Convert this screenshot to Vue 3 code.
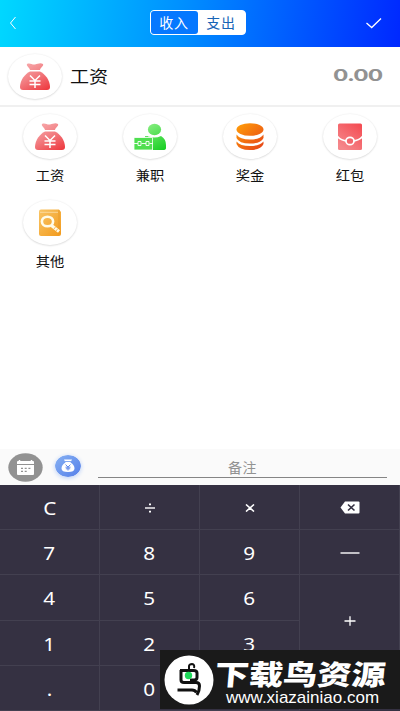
<script setup>
import { ref } from 'vue'

const categories = [
  { name: '工资', icon: 'bag' },
  { name: '兼职', icon: 'worker' },
  { name: '奖金', icon: 'coins' },
  { name: '红包', icon: 'envelope' },
  { name: '其他', icon: 'book' }
]
const selected = ref(categories[0])
const keys = ['C', '÷', '×', 'del', '7', '8', '9', 'minus', '4', '5', '6', 'plus', '1', '2', '3', '.', '0', '']
</script>

<template>
  <div class="screen">
    <svg class="defs" width="0" height="0">
      <defs>
        <linearGradient id="red" gradientUnits="userSpaceOnUse" x1="20" y1="8" x2="36" y2="37">
          <stop offset="0" stop-color="#f7a8aa" /><stop offset="0.45" stop-color="#f27f83" /><stop offset="1" stop-color="#ee3c42" />
        </linearGradient>
        <linearGradient id="green" gradientUnits="userSpaceOnUse" x1="24" y1="8" x2="40" y2="36">
          <stop offset="0" stop-color="#90f088" /><stop offset="1" stop-color="#19cf24" />
        </linearGradient>
        <linearGradient id="orange" gradientUnits="userSpaceOnUse" x1="16" y1="9" x2="38" y2="36">
          <stop offset="0" stop-color="#ff9c08" /><stop offset="1" stop-color="#e64418" />
        </linearGradient>
        <linearGradient id="pink" x1="1" y1="0" x2="0.3" y2="1">
          <stop offset="0" stop-color="#f4484f" /><stop offset="1" stop-color="#f5878b" />
        </linearGradient>
        <linearGradient id="amber" x1="0" y1="0" x2="1" y2="1">
          <stop offset="0" stop-color="#f9c565" /><stop offset="1" stop-color="#f29a1c" />
        </linearGradient>
        <linearGradient id="blue" x1="0" y1="0" x2="1" y2="1">
          <stop offset="0" stop-color="#86b1f3" /><stop offset="1" stop-color="#557fe9" />
        </linearGradient>
      </defs>
      <symbol id="bag" viewBox="0 0 54 45">
        <path fill="url(#red)" d="M19 10C22 8.500 24 11 27 10.500S32 8.500 35 10C36 12 32.500 13.500 32 16H22C21.500 13.500 18 12 19 10Z" />
        <path fill="url(#red)" d="M22 17.500H32C37 20 42 26 42 33Q42 36 39 36H15Q12 36 12 33C12 26 17 20 22 17.500Z" />
        <path fill="none" stroke="#fff" stroke-width="1.500" d="M22 21.500L27 26.500L32 21.500M27 26.500V34M21.500 27H32.500M21.500 30.500H32.500" />
      </symbol>
      <symbol id="worker" viewBox="0 0 54 45">
        <ellipse cx="31.500" cy="15.500" rx="6.600" ry="5.700" fill="url(#green)" />
        <path fill="url(#green)" d="M25 22Q31.500 25 38 22Q43 25 43 31V34Q43 36 40 36H22V22Z" />
        <path fill="#4fdf50" stroke="#fff" stroke-width="0.800" d="M11 23.500H29.500V36H11Z" />
        <path fill="none" stroke="#fff" stroke-width="0.900" d="M17 23V20.500H26V23M11 29.500H15M18.500 29.500H23M26.500 29.500H30M15 27.500H18V31.500H15ZM23 27.500H26V31.500H23Z" />
      </symbol>
      <symbol id="coins" viewBox="0 0 54 45">
        <g fill="url(#orange)">
          <ellipse cx="27" cy="15.500" rx="13.500" ry="6.300" />
          <path d="M13.500 20.500Q17 25.500 27 25.500T40.500 20.500V24Q38 29.500 27 29.500T13.500 24Z" />
          <path d="M13.500 27.500Q17 32 27 32T40.500 27.500V30Q38 36 27 36T13.500 30Z" />
        </g>
      </symbol>
      <symbol id="envelope" viewBox="0 0 54 45">
        <rect x="15" y="9.500" width="24" height="26.500" rx="1.500" fill="url(#pink)" />
        <path d="M14.500 22.500Q18 26.500 24 27M39.500 22.500Q36 26.500 30 27" fill="none" stroke="#fff" stroke-width="1.800" />
        <ellipse cx="27" cy="27" rx="4" ry="3.700" fill="#f2666c" stroke="#fff" stroke-width="1.700" />
      </symbol>
      <symbol id="book" viewBox="0 0 54 45">
        <path d="M18 9.500H36L38 12V34Q38 36 36 36H18Q16 36 16 34V11.500Q16 9.500 18 9.500Z" fill="url(#amber)" />
        <path d="M17 12.300H35" stroke="#fce0ac" stroke-width="0.800" />
        <path d="M36 10V34" stroke="#e59724" stroke-width="0.700" />
        <ellipse cx="24.500" cy="21.500" rx="5.600" ry="4.800" fill="none" stroke="#fffbe8" stroke-width="2.600" />
        <path d="M28.500 25.500L36 31.500" stroke="#fffbe8" stroke-width="3.200" />
        <path d="M32.500 27L30.800 29.200M34.700 28.800L33 31" stroke="#f4a73a" stroke-width="0.800" />
      </symbol>
    </svg>

    <header class="bar">
      <svg class="back" width="8" height="14" viewBox="0 0 8 14"><path d="M6.500 1L1.500 7L6.500 13" /></svg>
      <div class="tabs">
        <span class="tab active">收入</span>
        <span class="tab">支出</span>
      </div>
      <svg class="check" width="18" height="12" viewBox="0 0 18 12"><path d="M1.500 6L6.700 10.500L16 1.500" /></svg>
    </header>

    <section class="summary">
      <div class="disc"><svg width="54" height="45"><use :href="'#' + selected.icon" /></svg></div>
      <span class="name">{{ selected.name }}</span>
      <span class="amount">0.00</span>
    </section>

    <section class="grid">
      <div v-for="c in categories" :key="c.name" class="item" @click="selected = c">
        <div class="disc"><svg width="54" height="45"><use :href="'#' + c.icon" /></svg></div>
        <span class="label">{{ c.name }}</span>
      </div>
    </section>

    <section class="note">
      <svg class="calendar" width="35" height="29" viewBox="0 0 35 29">
        <ellipse cx="17.500" cy="14.500" rx="17.200" ry="14.300" fill="#929292" />
        <path d="M10 8H25Q26 8 26 9V11H9V9Q9 8 10 8ZM9 12H26V21Q26 22 25 22H10Q9 22 9 21Z" fill="#fff" />
        <path d="M11.500 7V9M23.500 7V9" stroke="#fff" stroke-width="1.500" />
        <path d="M13 15.300H23M13 18.300H20" stroke="#929292" stroke-width="1.200" stroke-dasharray="2 1.700" />
      </svg>
      <svg class="wallet" width="26" height="22" viewBox="0 0 26 22">
        <ellipse cx="13" cy="11" rx="13" ry="11" fill="url(#blue)" />
        <path d="M9 4.500H17L15.500 7.500Q19.500 10 19.500 13.500Q19.500 17 13 17T6.500 13.500Q6.500 10 10.500 7.500Z" fill="#fff" />
        <path d="M10 6.500H16" stroke="#779fef" stroke-width="0.900" />
        <path d="M10.500 9.500L13 12L15.500 9.500M13 12V15.500M10.500 12.200H15.500M10.800 13.800H15.200" stroke="#648ceb" stroke-width="1" fill="none" />
      </svg>
      <div class="field"><span>备注</span></div>
    </section>

    <section class="pad">
      <div v-for="(k, i) in keys" :key="i" class="key" :class="{ tall: k === 'plus' }">
        <svg v-if="k === 'del'" width="20" height="13" viewBox="0 0 20 13">
          <path d="M5 0.500H18.500Q19.500 0.500 19.500 1.500V11.500Q19.500 12.500 18.500 12.500H5L0.500 6.500Z" fill="#fff" />
          <path d="M8 3.500L14.500 9.500M14.500 3.500L8 9.500" stroke="#353142" stroke-width="1.600" />
        </svg>
        <svg v-else-if="k === 'minus'" width="20" height="12" viewBox="0 0 20 12"><path d="M0.500 7H19.500" stroke="#fff" stroke-width="1.400" /></svg>
        <svg v-else-if="k === 'plus'" class="plus" width="12" height="10" viewBox="0 0 12 10"><path d="M0.500 5H11.500M6 0.300V9.700" stroke="#fff" stroke-width="1.300" /></svg>
        <svg v-else-if="k === '÷'" class="op" width="12" height="10" viewBox="0 0 12 10">
          <path d="M1 5H11" stroke="#fff" stroke-width="1.400" /><path d="M5 0.500H7V2.300H5ZM5 7.700H7V9.500H5Z" fill="#fff" />
        </svg>
        <svg v-else-if="k === '×'" class="op" width="10" height="8" viewBox="0 0 10 8"><path d="M1 0.500L9 7.500M9 0.500L1 7.500" stroke="#fff" stroke-width="1.600" /></svg>
        <span v-else>{{ k }}</span>
      </div>
    </section>

    <aside class="badge">
      <svg class="logo" width="50" height="50" viewBox="0 0 50 50">
        <circle cx="25" cy="25" r="24.500" fill="#fff" />
        <g fill="none" stroke="#111" stroke-width="3">
          <path d="M16 15.500H29.500Q33 15.500 33 18V22.500Q33 25 30 25H26" />
          <path d="M17 15V25Q17 27.500 20 27.500H32Q35.500 27.500 35.500 31Q35.500 36 33 40" />
          <path d="M13.500 35H28Q31 35 32.500 37.500" />
        </g>
        <path d="M25 14V11Q25.500 9 28 9Q31 9.500 30 13" fill="none" stroke="#111" stroke-width="2" />
        <circle cx="24.500" cy="20.500" r="3.700" fill="#20d95b" />
      </svg>
      <div class="brand">
        <strong>下载鸟资源</strong>
        <span>www.xiazainiao.com</span>
      </div>
    </aside>
  </div>
</template>

<style>
body { margin: 0; overflow: hidden; }
</style>

<style scoped>
.screen {
  position: relative;
  display: flex;
  flex-direction: column;
  width: 400px;
  height: 711px;
  overflow: hidden;
  background: #fff;
  color: #111;
  font-family: "Noto Sans", "Noto Sans CJK SC", sans-serif;
}
.screen * { box-sizing: border-box; }
svg { display: block; flex: none; }
.defs { position: absolute; }
.bar {
  flex: none;
  display: flex;
  align-items: center;
  justify-content: space-between;
  height: 47px;
  padding: 0 17px 2px 9px;
  background: linear-gradient(97deg, #00d8ff 0%, #0090ff 45%, #0028ff 100%);
}
.bar path { fill: none; stroke: #fff; stroke-width: 1.3; }
.back path { stroke-width: 1; }
.tabs {
  display: flex;
  width: 96px;
  height: 25px;
  margin-left: 13px;
  border: 1px solid #fff;
  border-radius: 4px;
  background: #fff;
  font: 14px/23px "Noto Sans CJK SC", sans-serif;
}
.tab { flex: 1; text-align: center; color: #1764b5; letter-spacing: 0.8px; }
.active { border-radius: 3px; background: #0678ff; color: #fff; }
.summary {
  flex: none;
  display: flex;
  align-items: center;
  height: 60px;
  padding: 0 17px 0 8px;
  border-bottom: 2px solid #f0f0f0;
}
.disc {
  flex: none;
  width: 54px;
  height: 45px;
  border-radius: 50%;
  background: #fff;
  box-shadow: 0 0.5px 2px #cfcfcf;
}
.name { margin-left: 8px; font: 17px/24px "Noto Sans CJK SC", sans-serif; transform: scaleX(1.12); transform-origin: left; }
.amount {
  margin-left: auto;
  font: 900 17px/20px Lato, sans-serif;
  color: #929292;
  transform: translateY(-1px) scaleX(1.46);
  transform-origin: right;
}
.grid {
  flex: 1;
  display: grid;
  grid-template-columns: repeat(4, 100px);
  grid-auto-rows: 86px;
  align-content: start;
  padding-top: 6.5px;
}
.item { display: flex; flex-direction: column; align-items: center; }
.label { margin-top: 6.5px; font: 13px/20px "Noto Sans CJK SC", sans-serif; transform: scaleX(1.1); }
.note {
  flex: none;
  display: flex;
  height: 36px;
  padding: 4px 13px 0 8px;
  background: #fafafa;
}
.wallet { margin: 2px 0 0 12px; border-radius: 50%; box-shadow: 0 1px 4px #b9cff8; }
.field {
  flex: 1;
  height: 25px;
  margin-left: 17px;
  border-bottom: 1px solid #858585;
  text-align: center;
  font: 14px/28px "Noto Sans CJK SC", sans-serif;
  color: #929292;
  letter-spacing: 0.5px;
}
.pad {
  flex: none;
  display: grid;
  grid-template-columns: repeat(4, 100px);
  grid-template-rows: repeat(5, 45.2px);
  height: 226px;
  background: #353142;
}
.key {
  display: flex;
  align-items: center;
  justify-content: center;
  border-right: 1px solid #434050;
  border-bottom: 1px solid #434050;
  color: #fff;
  font: 18.5px/24px "Noto Sans", sans-serif;
}
.key span { transform: scaleX(1.12) translateY(1px); }
.op, .plus { transform: translateY(1px); }
.tall { grid-column: 4; grid-row: 3 / 5; }
.badge {
  position: absolute;
  left: 160px;
  top: 650px;
  display: flex;
  width: 240px;
  height: 59px;
  padding: 5px 0 0 4px;
  background: #1a1a1a;
  color: #fff;
}
.brand { display: flex; flex-direction: column; align-items: flex-start; margin-left: 2px; }
.brand strong {
  font: 900 28px/29px "Noto Sans CJK SC", sans-serif;
  transform: translate(-1px, 4px) skewX(-5deg) scaleX(1.22);
  transform-origin: left;
  white-space: nowrap;
}
.brand span { margin: 3px 0 0 10px; font: 17px/22px "Liberation Sans", sans-serif; }
</style>
